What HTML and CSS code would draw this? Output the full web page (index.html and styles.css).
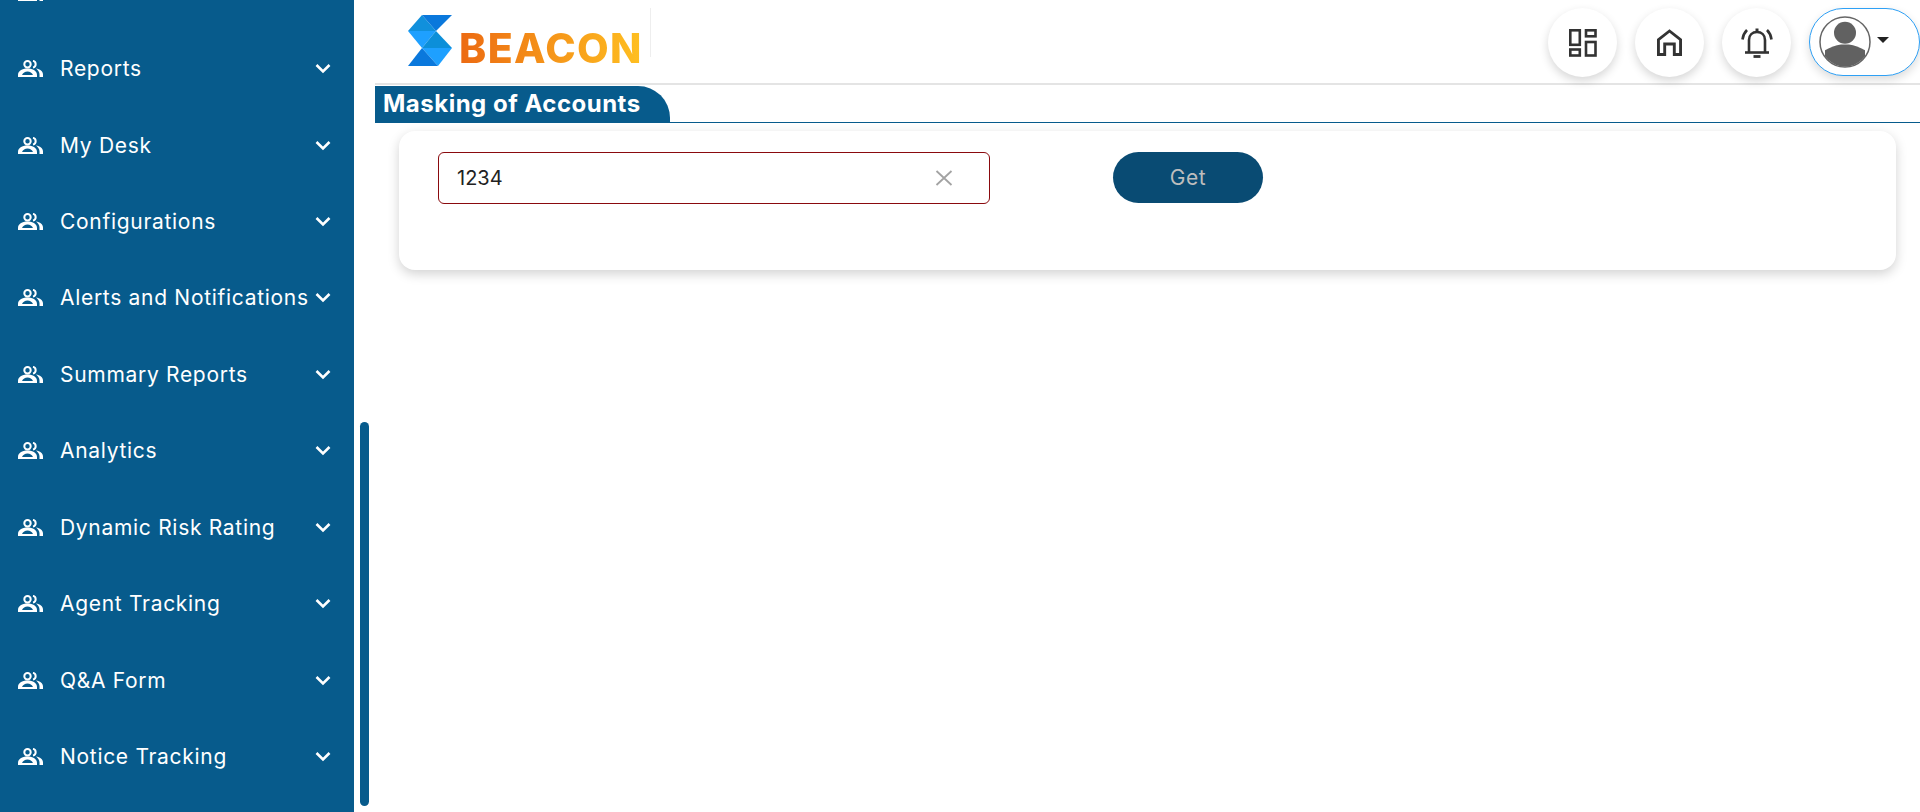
FILE: index.html
```html
<!DOCTYPE html>
<html lang="en">
<head>
    <meta charset="UTF-8">
    <meta name="viewport" content="width=device-width, initial-scale=1.0">
    <title>Masking of Accounts</title>
    <link rel="stylesheet" href="styles.css">
</head>
<body>
    <svg class="sprites" width="0" height="0">
        <symbol id="people" viewBox="0 0 25 17">
            <circle cx="9.500" cy="4.200" r="3.200" fill="none" stroke="currentColor" stroke-width="2"/>
            <path d="M15 .8a3.500 3.500 0 0 1 0 6.800" fill="none" stroke="currentColor" stroke-width="2"/>
            <path fill-rule="evenodd" d="M0 17v-2C0 11 4 8.500 9.500 8.500S19 11 19 15v2zM4 15h11c-1-2-3-3.500-5.500-3.500S5 13 4 15z" fill="currentColor"/>
            <path d="M18 8.500c4 .5 7 2.500 7 6V17h-3.500v-2.500c0-2.500-1.500-4.500-3.500-6z" fill="currentColor"/>
        </symbol>
        <symbol id="chevron" viewBox="0 0 16 11">
            <path d="M1.500 2 8 8.500 14.500 2" fill="none" stroke="currentColor" stroke-width="2.600"/>
        </symbol>
    </svg>

    <aside class="sidebar">
        <ul class="nav">
            <li class="nav-item"><svg class="nav-icon"><use href="#people"/></svg></li>
            <li class="nav-item"><svg class="nav-icon"><use href="#people"/></svg><span class="nav-label">Reports</span><svg class="nav-chevron"><use href="#chevron"/></svg></li>
            <li class="nav-item"><svg class="nav-icon"><use href="#people"/></svg><span class="nav-label">My Desk</span><svg class="nav-chevron"><use href="#chevron"/></svg></li>
            <li class="nav-item"><svg class="nav-icon"><use href="#people"/></svg><span class="nav-label">Configurations</span><svg class="nav-chevron"><use href="#chevron"/></svg></li>
            <li class="nav-item"><svg class="nav-icon"><use href="#people"/></svg><span class="nav-label">Alerts and Notifications</span><svg class="nav-chevron"><use href="#chevron"/></svg></li>
            <li class="nav-item"><svg class="nav-icon"><use href="#people"/></svg><span class="nav-label">Summary Reports</span><svg class="nav-chevron"><use href="#chevron"/></svg></li>
            <li class="nav-item"><svg class="nav-icon"><use href="#people"/></svg><span class="nav-label">Analytics</span><svg class="nav-chevron"><use href="#chevron"/></svg></li>
            <li class="nav-item"><svg class="nav-icon"><use href="#people"/></svg><span class="nav-label">Dynamic Risk Rating</span><svg class="nav-chevron"><use href="#chevron"/></svg></li>
            <li class="nav-item"><svg class="nav-icon"><use href="#people"/></svg><span class="nav-label">Agent Tracking</span><svg class="nav-chevron"><use href="#chevron"/></svg></li>
            <li class="nav-item"><svg class="nav-icon"><use href="#people"/></svg><span class="nav-label">Q&amp;A Form</span><svg class="nav-chevron"><use href="#chevron"/></svg></li>
            <li class="nav-item"><svg class="nav-icon"><use href="#people"/></svg><span class="nav-label">Notice Tracking</span><svg class="nav-chevron"><use href="#chevron"/></svg></li>
        </ul>
    </aside>
    <div class="scroll-track"><div class="scroll-thumb"></div></div>

    <main class="content">
        <header class="topbar">
            <div class="logo">
                <svg class="logo-mark" viewBox="0 0 44 51">
                    <polygon points="14,0 28,16 0,16" fill="#1190dc"/>
                    <polygon points="14,0 44,0 28,16" fill="#0a78dc"/>
                    <polygon points="0,16 28,16 14,33" fill="#1ea0ff"/>
                    <polygon points="28,16 44,33 14,33" fill="#0c8fd9"/>
                    <polygon points="14,33 44,33 30,51" fill="#1ea0ff"/>
                    <polygon points="14,33 30,51 0,51" fill="#0a78dc"/>
                </svg>
                <span class="logo-text">BEACON</span>
            </div>
            <div class="topbar-actions">
                <button class="round-btn" type="button">
                    <svg width="28" height="28" viewBox="0 0 28 28" fill="none" stroke="#333" stroke-width="2.600">
                        <rect x="1.300" y="1.300" width="9.500" height="14.500"/>
                        <rect x="17" y="1.300" width="9.500" height="6"/>
                        <rect x="1.300" y="20.500" width="9.500" height="6"/>
                        <rect x="17" y="13" width="9.500" height="13.500"/>
                    </svg>
                </button>
                <button class="round-btn" type="button">
                    <svg width="25" height="27" viewBox="0 0 26 28" fill="none" stroke="#333" stroke-width="3">
                        <path d="M1.500 26.500V11L13 2l11.500 9v15.500H18V15.500H8v11z"/>
                    </svg>
                </button>
                <button class="round-btn" type="button">
                    <svg width="32" height="32" viewBox="0 0 32 32" fill="none" stroke="#333" stroke-width="2.600">
                        <path d="M8 25V13C8 8 11.500 5 16 5s8 3 8 8v12"/>
                        <path d="M4 25.500h24"/>
                        <path d="M12.500 29.500h7" stroke-width="2.800"/>
                        <path d="M14.500 3h3" stroke-width="3"/>
                        <path d="M1.500 12.500C2 8.500 3.500 5.500 6 3"/>
                        <path d="M30.500 12.500C30 8.500 28.500 5.500 26 3"/>
                    </svg>
                </button>
                <button class="profile-btn" type="button">
                    <svg width="52" height="52" viewBox="0 0 52 52">
                        <defs><clipPath id="avatar-clip"><circle cx="26" cy="26" r="24.500"/></clipPath></defs>
                        <circle cx="26" cy="26" r="25" fill="#fff" stroke="#666" stroke-width="1.500"/>
                        <circle cx="26" cy="16.700" r="11" fill="#616161"/>
                        <path d="M6 34.300Q14 29.500 22 28.500H30Q38 29.500 46 34.300V52H6z" fill="#616161" clip-path="url(#avatar-clip)"/>
                    </svg>
                    <span class="caret"></span>
                </button>
            </div>
        </header>

        <div class="title-row">
            <h1 class="page-title">Masking of Accounts</h1>
        </div>

        <section class="card">
            <div class="field">
                <input class="field-input" type="text" value="1234">
                <svg class="field-clear" width="18" height="16" viewBox="0 0 18 16">
                    <path d="M1.500 1 16.500 15M16.500 1 1.500 15" stroke="#a3a3a3" stroke-width="1.800" fill="none"/>
                </svg>
            </div>
            <button class="get-btn" type="button">Get</button>
        </section>
    </main>
</body>
</html>
```

FILE: styles.css
```css
* {
    box-sizing: border-box;
}
html, body {
    height: 100%;
}
body {
    margin: 0;
    display: flex;
    height: 812px;
    overflow: hidden;
    background-color: #fff;
    font-family: Inter, "Noto Sans", Arial, sans-serif;
}
.sprites {
    display: block;
    flex: none;
}
.sidebar {
    width: 354px;
    flex: none;
    background-color: #075b8c;
    color: #fff;
    overflow: hidden;
}
.nav {
    list-style: none;
    margin: -46px 0 0;
    padding: 0;
}
.nav-item {
    display: flex;
    align-items: center;
    height: 76.45px;
    padding: 0 23px 0 18px;
}
.nav-icon {
    width: 25px;
    height: 17px;
    flex: none;
    margin-right: 17px;
}
.nav-label {
    flex: 1;
    font-size: 21px;
    letter-spacing: 0.7px;
    white-space: nowrap;
}
.nav-chevron {
    width: 16px;
    height: 11px;
    flex: none;
}
.scroll-track {
    width: 21px;
    flex: none;
    padding: 422px 6px 6px;
}
.scroll-thumb {
    width: 9px;
    height: 100%;
    background-color: #075b8c;
    border-radius: 5px;
}
.content {
    flex: 1;
    min-width: 0;
}
.topbar {
    display: flex;
    justify-content: space-between;
    height: 85px;
    border-bottom: 2px solid #e4e4e4;
    padding: 8px 0 0 33px;
}
.logo {
    display: flex;
    align-items: flex-start;
    width: 243px;
    height: 49px;
    border-right: 1px solid #eee;
    padding-top: 7px;
}
.logo-mark {
    width: 44px;
    height: 51px;
    flex: none;
}
.logo-text {
    margin: 15px 0 0 7px;
    font-size: 41px;
    font-weight: 800;
    letter-spacing: 1.4px;
    line-height: 36px;
    background: linear-gradient(90deg, #ec6a12, #ffc021);
    -webkit-background-clip: text;
    background-clip: text;
    color: transparent;
}
.topbar-actions {
    display: flex;
    gap: 18px;
}
.round-btn {
    display: flex;
    align-items: center;
    justify-content: center;
    width: 69px;
    height: 69px;
    padding: 0;
    border: none;
    border-radius: 50%;
    background-color: #fff;
    box-shadow: 0 4px 10px rgba(0, 0, 0, 0.16);
}
.profile-btn {
    display: flex;
    align-items: center;
    gap: 6px;
    width: 111px;
    height: 68px;
    padding: 0 0 0 9px;
    border: 1px solid #2ea0f5;
    border-radius: 34px;
    background-color: #fff;
    box-shadow: 0 4px 10px rgba(0, 0, 0, 0.14);
}
.caret {
    width: 0;
    height: 0;
    border-style: solid;
    border-width: 6px 6px 0;
    border-color: #222 transparent transparent;
    margin-bottom: 5px;
}
.title-row {
    margin-top: 1px;
    height: 37px;
    border-bottom: 1.5px solid #075b8c;
}
.page-title {
    width: 295px;
    height: 36px;
    margin: 0;
    padding-left: 8px;
    background-color: #075b8c;
    border-top-right-radius: 32px;
    color: #fff;
    font-size: 24px;
    font-weight: 700;
    letter-spacing: 0.5px;
    line-height: 36px;
    white-space: nowrap;
}
.card {
    display: flex;
    align-items: flex-start;
    gap: 123px;
    height: 139px;
    margin: 8px 24px 0;
    padding: 21px 39px;
    background-color: #fff;
    border-radius: 16px;
    box-shadow: 0 4px 12px rgba(0, 0, 0, 0.18);
}
.field {
    display: flex;
    align-items: center;
    width: 552px;
    height: 52px;
    border: 1px solid #8a0a0e;
    border-radius: 6px;
    padding: 0 36px 0 18px;
}
.field-input {
    flex: 1;
    min-width: 0;
    border: none;
    outline: none;
    padding: 0;
    font-family: inherit;
    font-size: 20px;
    color: #222;
}
.field-clear {
    flex: none;
}
.get-btn {
    width: 150px;
    height: 51px;
    border: none;
    border-radius: 26px;
    background-color: #094b73;
    color: #bdbdbd;
    font-family: inherit;
    font-size: 21px;
    letter-spacing: 0.6px;
}
```
